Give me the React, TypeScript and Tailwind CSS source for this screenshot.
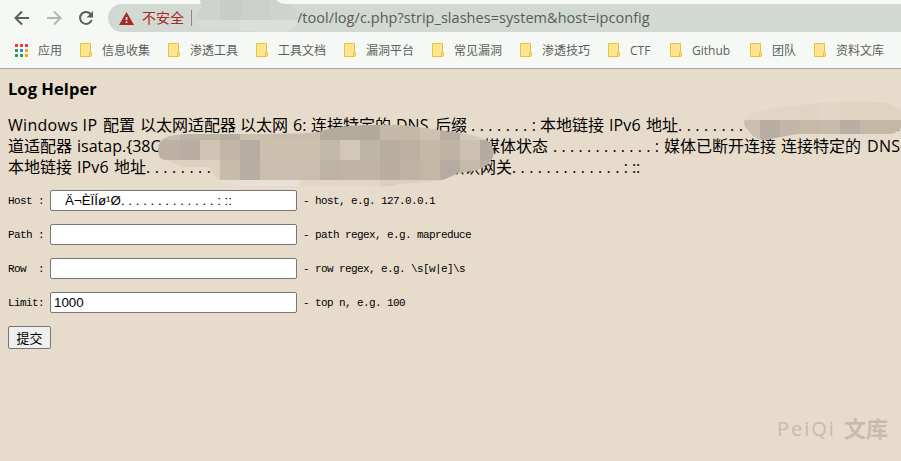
import type { ReactNode } from "react";

const cjk = "font-['Open_Sans','Noto_Sans_CJK_SC',sans-serif]";

function Folder() {
  return (
    <svg width="12" height="14" viewBox="0 0 12 14" className="shrink-0">
      <path d="M.5.5h10v9h1v3.5h-1v.5H.5z" fill="#ffe58f" stroke="#e6c240" />
      <path d="M9.5 13V9.5h1" fill="none" stroke="#e6c240" />
    </svg>
  );
}

function Bookmark({ label, width }: { label: string; width: string }) {
  return (
    <div className={`flex shrink-0 items-center gap-[10px] ${width}`}>
      <Folder />
      <span className="pt-[2px] whitespace-nowrap">{label}</span>
    </div>
  );
}

// One run of text held in a slot of fixed width.
function Run({ w, className = "", children }: { w: string; className?: string; children?: ReactNode }) {
  return <span className={`block h-[21px] shrink-0 whitespace-nowrap ${w} ${className}`}>{children}</span>;
}

function Dots({ w, children }: { w: string; children: string }) {
  return (
    <span className={`block h-[21px] shrink-0 ${w}`}>
      <span className="block [text-align-last:justify]">{children}</span>
    </span>
  );
}

function Field({ label, value, hint, inset = "pl-[3px]" }: { label: string; value?: string; hint: string; inset?: string }) {
  return (
    <div className="flex h-[21px] items-center font-['Liberation_Mono',monospace] text-[11px] tracking-[-0.601px] text-black">
      <label className="w-[42px] shrink-0 pt-[2px] whitespace-pre">{label}</label>
      <input
        defaultValue={value}
        className={`h-[21px] w-[247px] rounded-[2px] border border-[#767676] bg-white font-['Liberation_Sans',sans-serif] text-[13.33px] tracking-normal outline-none ${inset}`}
      />
      <span className="pt-[2px] pl-[6px] whitespace-pre">{hint}</span>
    </div>
  );
}

type Tile = [number, number, number, number, string];

const mainTiles: Tile[] = [
  [158, 124, 22, 16, "#c7bcad"], [180, 124, 20, 16, "#beb3a5"], [200, 124, 20, 16, "#c0b5a5"],
  [220, 124, 20, 16, "#b7ad9f"], [240, 124, 30, 16, "#cbbfae"], [270, 124, 50, 16, "#cabdae"],
  [320, 124, 40, 16, "#b5aa9e"], [360, 124, 20, 16, "#b1a99b"], [380, 124, 20, 16, "#c4b9a9"],
  [400, 124, 20, 16, "#c4b8a7"], [420, 124, 20, 16, "#cec1b0"], [440, 124, 20, 16, "#b8aca3"], [460, 124, 36, 16, "#d5cab9"],
  [158, 140, 22, 20, "#bdb1a3"], [180, 140, 20, 20, "#b9aea1"], [200, 140, 20, 20, "#d0c4b4"],
  [220, 140, 20, 20, "#c2b7a7"], [240, 140, 20, 20, "#b8ada1"], [260, 140, 60, 20, "#cbbfae"],
  [320, 140, 20, 20, "#c3b9a8"], [340, 140, 20, 20, "#d3c8b7"], [360, 140, 20, 20, "#beb5a5"],
  [380, 140, 20, 20, "#b8aea0"], [400, 140, 20, 20, "#bcb1a2"], [420, 140, 20, 20, "#c4b8a7"],
  [440, 140, 20, 20, "#bfb3a3"], [460, 140, 20, 20, "#cbc0b1"], [480, 140, 16, 20, "#b5ab9c"],
  [158, 160, 62, 20, "#ddd1c0"], [220, 160, 20, 20, "#c8bcaa"], [240, 160, 20, 20, "#b9aea3"],
  [260, 160, 60, 20, "#cabeae"], [320, 160, 20, 20, "#bdb3a3"], [340, 160, 40, 20, "#c0b5a5"],
  [380, 160, 20, 20, "#b9aea0"], [400, 160, 20, 20, "#beb3a4"], [420, 160, 20, 20, "#c3b7a6"],
  [440, 160, 20, 20, "#b6aaa2"], [460, 160, 20, 20, "#c3baa9"], [480, 160, 16, 20, "#b8ad9e"],
  [210, 180, 90, 10, "#e8dfd6"], [300, 180, 80, 10, "#e2d6c6"], [380, 180, 70, 10, "#dbcfbe"],
];

const sideTiles: Tile[] = [
  [744, 100, 56, 20, "#e2d7c6"], [800, 100, 20, 20, "#dfd4c3"], [820, 100, 20, 20, "#e2d7c6"], [840, 100, 61, 20, "#dfd3c2"],
  [744, 120, 16, 20, "#cbbfaf"], [760, 120, 20, 20, "#b9aea1"], [780, 120, 20, 20, "#c2b6a6"],
  [800, 120, 20, 20, "#c5b9a8"], [820, 120, 20, 20, "#c7bbab"], [840, 120, 20, 20, "#b9aea3"],
  [860, 120, 41, 20, "#c3b7a6"],
];

function Tiles({ tiles }: { tiles: Tile[] }) {
  return tiles.map(([x, y, w, h, fill]) => <rect key={`${x}-${y}`} x={x} y={y} width={w} height={h} fill={fill} />);
}

function Redactions() {
  return (
    <svg className="pointer-events-none absolute inset-0" width="901" height="461" shapeRendering="crispEdges">
      <defs>
        <clipPath id="main">
          <path d="M170 136Q176 134 196 134L240 134Q310 134 318 132Q338 125 368 125H400Q423 127 438 130L467 134Q494 138 494 153Q492 166 474 171L458 173Q445 180 438 181L400 184Q385 188 374 186L248 186Q220 185 216 177Q211 172 210 167H185Q174 165 168 160Q158 161 158 150Q158 139 170 136Z" />
        </clipPath>
        <clipPath id="side">
          <path d="M744 121Q748 112 780 107L820 103Q840 101 880 102Q897 104 901 112V128Q896 134 889 134H797L765 140Q752 139 749 131Q744 128 744 121Z" />
        </clipPath>
        <clipPath id="address">
          <path d="M196 20Q196 12 202 9L200 0H276L280 3Q298 5 298 20Q297 29 287 32H268L245 31H213Q197 30 196 20Z" />
        </clipPath>
      </defs>
      <g clipPath="url(#main)"><Tiles tiles={mainTiles} /></g>
      <g clipPath="url(#side)"><Tiles tiles={sideTiles} /></g>
      <g clipPath="url(#address)">
        <path fill="#d0d2d0" d="M190 0h110v34H190z" />
        <path fill="#c9ccc9" d="M220 0h22v20h-22z" />
        <path fill="#cccfcc" d="M242 0h28v20h-28z" />
        <path fill="#d9dbd9" d="M190 20h50v14h-50z" />
        <path fill="#dcdedc" d="M240 20h60v14h-60z" />
      </g>
    </svg>
  );
}

export default function App() {
  return (
    <div className={`relative flex h-[461px] w-[901px] flex-col overflow-hidden bg-[#e7dccb] ${cjk}`}>
      <header className="h-[69px] shrink-0 border-b border-[#a6a6a5] bg-[#f6f8f6]">
        <div className="flex h-[36px] items-center">
          <svg width="108" height="36" viewBox="0 0 108 36" fill="none" strokeWidth="2" className="shrink-0">
            <path d="M29 18H16M22 11.5 15.5 18l6.5 6.5" stroke="#5b5e5b" />
            <path d="M47 18h13M54 11.5l6.5 6.5-6.5 6.5" stroke="#b5b7b5" />
            <path d="M91 14.5A6 6 0 1 0 91.7 20" stroke="#5b5e5b" />
            <path d="M93 11v6.5h-6.5z" fill="#5b5e5b" />
          </svg>
          <div className="flex h-7 flex-1 items-center rounded-l-full bg-[#d2d8d2] pl-[11px] text-[#585b59]">
            <svg width="15" height="13" viewBox="0 0 15 13">
              <path d="M7.5 0 15 13H0z" fill="#a52a24" />
              <path d="M6.7 5h1.7v3H6.7zM6.7 9.2h1.7v1.7H6.7z" fill="#e8e8e5" />
            </svg>
            <span className="ml-2 w-[49px] text-[14px] leading-7 text-[#a52a24]">不安全</span>
            <span className="h-4 w-px bg-[#858a86]" />
            <span className="ml-[105px] text-[14.5px] leading-7 tracking-[0.04px] whitespace-nowrap">/tool/log/c.php?strip_slashes=system&amp;host=ipconfig</span>
          </div>
        </div>
        <nav className="flex h-7 items-center pl-[15px] text-[12px] leading-4 text-[#5b5e5b]">
          <svg width="13" height="13" viewBox="0 0 13 13" className="mr-[10px] shrink-0">
            <path d="M0 0h3v3H0zM5 0h3v3H5zM10 0h3v3h-3z" fill="#ee3b32" />
            <path d="M0 5h3v3H0zM0 10h3v3H0zM5 10h3v3H5z" fill="#2c9d58" />
            <path d="M5 5h3v3H5z" fill="#1e88f5" />
            <path d="M10 5h3v3h-3zM10 10h3v3h-3z" fill="#f4ac0c" />
          </svg>
          <span className="w-[42px] shrink-0 pt-[2px]">应用</span>
          <Bookmark label="信息收集" width="w-[88px]" />
          <Bookmark label="渗透工具" width="w-[88px]" />
          <Bookmark label="工具文档" width="w-[88px]" />
          <Bookmark label="漏洞平台" width="w-[88px]" />
          <Bookmark label="常见漏洞" width="w-[88px]" />
          <Bookmark label="渗透技巧" width="w-[88px]" />
          <Bookmark label="CTF" width="w-[62px]" />
          <Bookmark label="Github" width="w-[80px]" />
          <Bookmark label="团队" width="w-[64px]" />
          <Bookmark label="资料文库" width="w-[80px]" />
        </nav>
      </header>

      <main className="flex flex-1 flex-col pl-2 text-black">
        <h3 className="mt-[9px] h-[21px] text-[16.5px] leading-[21px] font-bold tracking-[0.05px]">Log Helper</h3>
        <div className="mt-[16px] flex flex-col text-[16px] leading-[21px]">
          <div className="flex h-[21px]">
            <Run w="w-[95px]" className="tracking-[0.3px]">Windows IP</Run>
            <Run w="w-[37px]">配置</Run>
            <Run w="w-[100px]">以太网适配器</Run>
            <Run w="w-[53px]">以太网</Run>
            <Run w="w-[18px]">6:</Run>
            <Run w="w-[85px]">连接特定的</Run>
            <Run w="w-[39px]">DNS</Run>
            <Run w="w-[36px]">后缀</Run>
            <Dots w="w-[65px]">. . . . . . . :</Dots>
            <Run w="w-[4px]" />
            <Run w="w-[69px]">本地链接</Run>
            <Run w="w-[37px]" className="tracking-[0.1px]">IPv6</Run>
            <Run w="w-[32px]">地址</Run>
            <Dots w="w-[65px]">. . . . . . . .</Dots>
            <Run w="w-[153px]" />
            <Run w="w-[10px]">.</Run>
          </div>
          <div className="flex h-[21px]">
            <Run w="w-[69px]">道适配器</Run>
            <Run w="w-[407px]">isatap.{"{"}38C</Run>
            <Run w="w-[69px]">媒体状态</Run>
            <Dots w="w-[106px]">. . . . . . . . . . . . :</Dots>
            <Run w="w-[5px]" />
            <Run w="w-[117px]">媒体已断开连接</Run>
            <Run w="w-[86px]">连接特定的</Run>
            <Run w="w-[39px]" className="tracking-[0.3px]">DNS</Run>
          </div>
          <div className="flex h-[21px]">
            <Run w="w-[69px]">本地链接</Run>
            <Run w="w-[37px]" className="tracking-[0.1px]">IPv6</Run>
            <Run w="w-[32px]">地址</Run>
            <Dots w="w-[65px]">. . . . . . . .</Dots>
            <Run w="w-[237px]" />
            <Run w="w-[64px]">默认网关</Run>
            <Dots w="w-[116px]">. . . . . . . . . . . . . :</Dots>
            <Run w="w-[20px]" className="pl-1 tracking-[-0.3px]">::</Run>
          </div>
        </div>
        <form className="mt-[12px] flex flex-col gap-[13px]">
          <Field label="Host :" value="Ä¬ÈÏÍø¹Ø. . . . . . . . . . . . . : ::" hint="- host, e.g. 127.0.0.1" inset="pl-[14px]" />
          <Field label="Path :" hint="- path regex, e.g. mapreduce" />
          <Field label="Row  :" hint="- row regex, e.g. \s[w|e]\s" />
          <Field label="Limit:" value="1000" hint="- top n, e.g. 100" />
          <button type="button" className="h-[23px] w-[43px] rounded-[2px] border border-[#767676] bg-[#efefef] pt-px text-[13px] leading-[20px]">提交</button>
        </form>
      </main>

      <Redactions />
      <div className="absolute top-[414px] left-[777px] flex h-7 items-center gap-2 text-[#c7bbab]">
        <span className="pt-[2px] font-['Open_Sans',sans-serif] text-[20px] leading-7 font-medium tracking-[2px]">PeiQi</span>
        <span className="text-[22px] leading-7 font-bold">文库</span>
      </div>
    </div>
  );
}
